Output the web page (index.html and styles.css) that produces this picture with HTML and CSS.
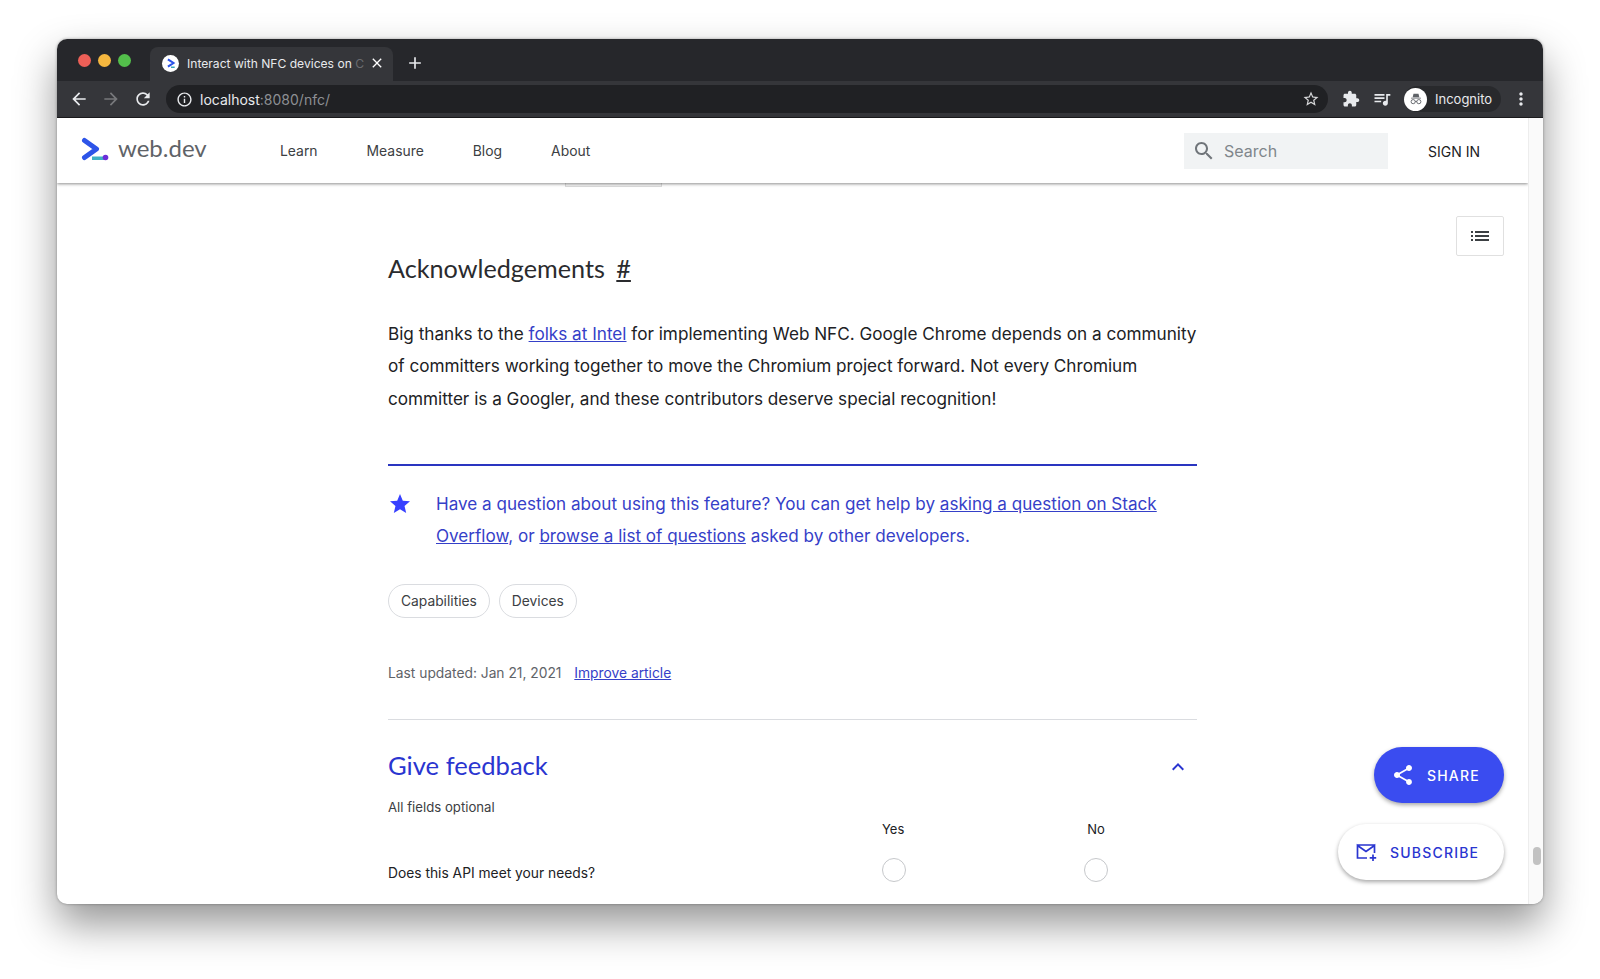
FILE: index.html
```html
<!DOCTYPE html>
<html>

	<head>
		<meta charset="UTF-8">
		<title>Interact with NFC devices on Chrome</title>
		<link rel="stylesheet" href="styles.css">
	</head>

	<body>
		<div class="window">
			<div class="tabstrip">
				<div class="lights">
					<span class="light red"></span>
					<span class="light yellow"></span>
					<span class="light green"></span>
				</div>
				<div class="tab">
					<span class="favicon">
						<svg viewBox="0 0 26 26" width="16" height="16"><path d="M8 7l9 6-9 6" fill="none" stroke="#2d54e8" stroke-width="3.4"/><path d="M13 20h6" stroke="#3aa6b9" stroke-width="2.4"/></svg>
					</span>
					<span class="tab-title">Interact with NFC devices on <span class="fade">C</span></span>
					<svg class="tab-close" viewBox="0 0 24 24" width="16" height="16"><path d="M19 6.41L17.59 5 12 10.59 6.41 5 5 6.41 10.59 12 5 17.59 6.41 19 12 13.41 17.59 19 19 17.59 13.41 12z"/></svg>
				</div>
				<svg class="new-tab" viewBox="0 0 24 24" width="20" height="20"><path d="M19 13h-6v6h-2v-6H5v-2h6V5h2v6h6v2z"/></svg>
			</div>

			<div class="toolbar">
				<svg class="tool" viewBox="0 0 24 24" width="20" height="20"><path d="M20 11H7.83l5.59-5.59L12 4l-8 8 8 8 1.41-1.41L7.83 13H20v-2z"/></svg>
				<svg class="tool dim" viewBox="0 0 24 24" width="20" height="20"><path d="M12 4l-1.41 1.41L16.17 11H4v2h12.17l-5.58 5.59L12 20l8-8z"/></svg>
				<svg class="tool" viewBox="0 0 24 24" width="20" height="20"><path d="M17.65 6.35C16.2 4.9 14.21 4 12 4c-4.42 0-7.99 3.58-7.99 8s3.57 8 7.99 8c3.73 0 6.84-2.55 7.73-6h-2.08c-.82 2.33-3.04 4-5.65 4-3.31 0-6-2.69-6-6s2.69-6 6-6c1.66 0 3.14.69 4.22 1.78L13 11h7V4l-2.35 2.35z"/></svg>
				<div class="omnibox">
					<svg class="info" viewBox="0 0 24 24" width="17" height="17"><path d="M11 7h2v2h-2zm0 4h2v6h-2zm1-9C6.48 2 2 6.48 2 12s4.48 10 10 10 10-4.48 10-10S17.52 2 12 2zm0 18c-4.41 0-8-3.59-8-8s3.59-8 8-8 8 3.59 8 8-3.59 8-8 8z"/></svg>
					<span class="url">localhost<span class="url-rest">:8080/nfc/</span></span>
					<svg class="bookmark" viewBox="0 0 24 24" width="18" height="18"><path d="M22 9.24l-7.19-.62L12 2 9.19 8.63 2 9.24l5.46 4.73L5.82 21 12 17.27 18.18 21l-1.63-7.03L22 9.24zM12 15.4l-3.76 2.27 1-4.28-3.32-2.88 4.38-.38L12 6.1l1.71 4.04 4.38.38-3.32 2.88 1 4.28L12 15.4z"/></svg>
				</div>
				<svg class="tool ext" viewBox="0 0 24 24" width="18" height="18"><path d="M20.5 11H19V7c0-1.1-.9-2-2-2h-4V3.5C13 2.12 11.88 1 10.5 1S8 2.12 8 3.5V5H4c-1.1 0-1.99.9-1.99 2v3.8H3.5c1.49 0 2.7 1.21 2.7 2.7s-1.21 2.7-2.7 2.7H2V20c0 1.1.9 2 2 2h3.8v-1.5c0-1.49 1.21-2.7 2.7-2.7 1.49 0 2.7 1.21 2.7 2.7V22H17c1.1 0 2-.9 2-2v-4h1.5c1.38 0 2.5-1.12 2.5-2.5S21.88 11 20.5 11z"/></svg>
				<svg class="tool media" viewBox="0 0 24 24" width="20" height="20"><path d="M15 6H3v2h12V6zm0 4H3v2h12v-2zM3 16h8v-2H3v2zM17 6v8.18c-.31-.11-.65-.18-1-.18-1.66 0-3 1.34-3 3s1.34 3 3 3 3-1.34 3-3V8h3V6h-5z"/></svg>
				<div class="profile">
					<span class="avatar">
						<svg viewBox="0 0 24 24" width="20" height="20"><path d="M6 10.4h12v1H6zM8 10l1-4.400h6l1 4.400z" fill="#5f6368"/><circle cx="8.600" cy="15.200" r="2.500" fill="none" stroke="#5f6368" stroke-width="1.100"/><circle cx="15.400" cy="15.200" r="2.500" fill="none" stroke="#5f6368" stroke-width="1.100"/><path d="M11 15h2" stroke="#5f6368" stroke-width="1.100"/></svg>
					</span>
					<span class="profile-name">Incognito</span>
				</div>
				<svg class="tool more" viewBox="0 0 24 24" width="20" height="20"><path d="M12 8c1.100 0 2-.9 2-2s-.9-2-2-2-2 .9-2 2 .9 2 2 2zm0 2c-1.100 0-2 .9-2 2s.9 2 2 2 2-.9 2-2-.9-2-2-2zm0 6c-1.100 0-2 .9-2 2s.9 2 2 2 2-.9 2-2-.9-2-2-2z"/></svg>
			</div>

			<div class="page">
				<div class="viewport">
					<header class="site-header">
						<a class="brand">
							<svg viewBox="0 0 28 24" width="28" height="24"><path d="M3.500 3.500l12 8.500-12 8.500" fill="none" stroke="#2d54e8" stroke-width="5" stroke-linejoin="round" stroke-linecap="round"/><path d="M11 21.200h13" stroke="#3fb1c4" stroke-width="3.600"/><circle cx="24.500" cy="20.500" r="2.800" fill="#6b2fd8"/></svg>
							<span class="brand-name">web.dev</span>
						</a>
						<nav class="site-nav">
							<a>Learn</a>
							<a>Measure</a>
							<a>Blog</a>
							<a>About</a>
						</nav>
						<div class="search">
							<svg viewBox="0 0 24 24" width="24" height="24"><path d="M15.500 14h-.79l-.28-.27C15.410 12.590 16 11.110 16 9.500 16 5.910 13.090 3 9.500 3S3 5.910 3 9.500 5.910 16 9.500 16c1.610 0 3.090-.59 4.230-1.570l.27.28v.79l5 4.990L20.490 19l-4.990-5zm-6 0C7.010 14 5 11.990 5 9.500S7.010 5 9.500 5 14 7.010 14 9.500 11.990 14 9.500 14z"/></svg>
							<span>Search</span>
						</div>
						<a class="sign-in">SIGN IN</a>
					</header>

					<main class="article">
						<div class="clipped"></div>
						<h2 class="ack">Acknowledgements <a class="hash">#</a></h2>
						<p class="body-text">Big thanks to the <a>folks at Intel</a> for implementing Web NFC. Google Chrome depends on a community of committers working together to move the Chromium project forward. Not every Chromium committer is a Googler, and these contributors deserve special recognition!</p>

						<div class="callout">
							<svg viewBox="0 0 24 24" width="24" height="24"><path d="M12 17.270L18.180 21l-1.640-7.030L22 9.240l-7.190-.61L12 2 9.190 8.630 2 9.240l5.460 4.730L5.820 21z"/></svg>
							<p>Have a question about using this feature? You can get help by <a>asking a question on Stack Overflow</a>, or <a>browse a list of questions</a> asked by other developers.</p>
						</div>

						<div class="chips">
							<a class="chip">Capabilities</a>
							<a class="chip">Devices</a>
						</div>

						<p class="updated">Last updated: Jan 21, 2021 <a>Improve article</a></p>

						<section class="feedback">
							<div class="feedback-head">
								<h2>Give feedback</h2>
								<svg viewBox="0 0 24 24" width="24" height="24"><path d="M12 8l-6 6 1.410 1.410L12 10.830l4.590 4.580L18 14z"/></svg>
							</div>
							<p class="optional">All fields optional</p>
							<div class="answers">
								<span>Yes</span>
								<span>No</span>
							</div>
							<div class="question">
								<span class="question-text">Does this API meet your needs?</span>
								<span class="radio"></span>
								<span class="radio"></span>
							</div>
						</section>
					</main>

					<button class="toc">
						<svg viewBox="0 0 24 24" width="24" height="24"><path d="M3 13h2v-2H3v2zm0 4h2v-2H3v2zm0-8h2V7H3v2zm4 4h14v-2H7v2zm0 4h14v-2H7v2zM7 7v2h14V7H7z"/></svg>
					</button>

					<a class="fab share">
						<svg viewBox="0 0 24 24" width="24" height="24"><path d="M18 16.080c-.76 0-1.440.3-1.960.77L8.910 12.700c.05-.23.09-.46.09-.7s-.04-.47-.09-.7l7.050-4.110c.54.5 1.250.81 2.040.81 1.660 0 3-1.340 3-3s-1.340-3-3-3-3 1.340-3 3c0 .24.04.47.09.7L8.040 9.810C7.500 9.310 6.790 9 6 9c-1.660 0-3 1.340-3 3s1.340 3 3 3c.79 0 1.500-.31 2.040-.81l7.120 4.160c-.05.21-.08.43-.08.65 0 1.610 1.310 2.920 2.920 2.920 1.610 0 2.920-1.310 2.920-2.920s-1.310-2.920-2.920-2.920z"/></svg>
						SHARE
					</a>
					<a class="fab subscribe">
						<svg viewBox="0 0 24 24" width="24" height="24"><path d="M13 18H3.500V5.500L12 11.500l8.500-6V13M3.500 5h17" fill="none" stroke="#2a35d0" stroke-width="1.700"/><path d="M19 14.500v6.500M15.700 17.800h6.500" stroke="#2a35d0" stroke-width="1.700"/></svg>
						SUBSCRIBE
					</a>
				</div>
				<div class="scrollbar"><span class="thumb"></span></div>
			</div>
		</div>
	</body>

</html>
```

FILE: styles.css
```css
html,
body {
	height: 100%;
	overflow: hidden;
}

body {
	margin: 0;
	padding: 39px 0 0 57px;
	box-sizing: border-box;
	background: #fff;
	font-family: Inter, "Liberation Sans", sans-serif;
	color: #202124;
}

p,
h2 {
	margin: 0;
}

a {
	color: inherit;
}

.window {
	width: 1486px;
	height: 865px;
	border-radius: 10px;
	display: flex;
	flex-direction: column;
	overflow: hidden;
	background: #fff;
	box-shadow: 0 20px 42px rgba(0, 0, 0, .42), 0 0 3px rgba(0, 0, 0, .35);
}

/* browser chrome */
.tabstrip {
	height: 42px;
	flex: none;
	display: flex;
	align-items: flex-end;
	background: #26272b;
}

.lights {
	width: 93px;
	height: 100%;
	padding: 15px 0 0 21px;
	box-sizing: border-box;
	display: flex;
	gap: 7px;
}

.light {
	width: 13px;
	height: 13px;
	border-radius: 50%;
}

.red {
	background: #ec5f57;
}

.yellow {
	background: #f5b73f;
}

.green {
	background: #53bf4b;
}

.tab {
	width: 243px;
	height: 34px;
	padding: 0 8px 2px 12px;
	box-sizing: border-box;
	display: flex;
	align-items: center;
	background: #35363a;
	border-radius: 8px 8px 0 0;
	color: #e8eaed;
	font-size: 12.1px;
}

.favicon {
	width: 17px;
	height: 17px;
	flex: none;
	display: flex;
	align-items: center;
	justify-content: center;
	border-radius: 50%;
	background: #fff;
	margin-right: 8px;
}

.tab-title {
	flex: 1;
	white-space: nowrap;
	overflow: hidden;
}

.fade {
	color: #6a6b6f;
}

.tab-close {
	fill: #fff;
	flex: none;
}

.new-tab {
	fill: #e8eaed;
	margin: 0 0 8px 12px;
}

.toolbar {
	height: 37px;
	flex: none;
	display: flex;
	align-items: center;
	background: #35363a;
	padding-left: 12px;
	border-bottom: 1px solid #1c1c1e;
	box-sizing: border-box;
}

.tool {
	fill: #e8eaed;
	flex: none;
	margin-right: 12px;
}

.tool.dim {
	fill: #77787b;
}

.omnibox {
	width: 1162px;
	height: 28px;
	margin-left: 1px;
	padding: 0 8px 0 10px;
	box-sizing: border-box;
	display: flex;
	align-items: center;
	border-radius: 14px;
	background: #202124;
	font-size: 14px;
}

.info {
	fill: #e8eaed;
	margin-right: 7px;
}

.url {
	flex: 1;
	color: #e8eaed;
}

.url-rest {
	color: #8d8f93;
}

.bookmark {
	fill: #d5d6d8;
}

.tool.ext {
	margin-left: 14px;
	margin-right: 12px;
}

.tool.media {
	margin-right: 0;
}

.profile {
	height: 26px;
	width: 97px;
	margin-left: 12px;
	flex: none;
	display: flex;
	align-items: center;
	border-radius: 13px;
	background: #28292c;
	color: #e8eaed;
	font-size: 13px;
}

.avatar {
	width: 23px;
	height: 23px;
	margin-right: 8px;
	display: flex;
	align-items: center;
	justify-content: center;
	border-radius: 50%;
	background: #fff;
}

.tool.more {
	margin: 0 0 0 10px;
}

/* page */
.page {
	flex: 1;
	display: flex;
	min-height: 0;
}

.viewport {
	flex: 1;
	position: relative;
	min-width: 0;
}

.scrollbar {
	width: 15px;
	flex: none;
	box-sizing: border-box;
	padding: 729px 0 0 4px;
	position: relative;
	z-index: 2;
	background: #fafafa;
	border-left: 1px solid #ededed;
}

.thumb {
	display: block;
	width: 8px;
	height: 18px;
	border-radius: 4px;
	background: #c2c2c2;
}

.site-header {
	height: 65px;
	position: relative;
	z-index: 1;
	display: flex;
	align-items: center;
	background: #fff;
	box-shadow: 0 1px 3px rgba(0, 0, 0, .45);
}

.brand {
	width: 223px;
	padding-left: 24px;
	margin-top: -4px;
	box-sizing: border-box;
	display: flex;
	align-items: center;
	gap: 9px;
}

.brand-name {
	font-family: Lato, sans-serif;
	font-size: 24px;
	color: #5f6368;
	margin-top: -2px;
}

.site-nav {
	display: flex;
	gap: 49px;
	font-size: 13.9px;
	color: #3c4043;
	flex: 1;
}

.search {
	width: 204px;
	height: 36px;
	padding-left: 8px;
	box-sizing: border-box;
	display: flex;
	align-items: center;
	gap: 8px;
	background: #f1f3f4;
	color: #80868b;
	font-size: 16px;
}

.search svg {
	fill: #70757a;
}

.sign-in {
	width: 140px;
	padding-left: 40px;
	box-sizing: border-box;
	font-size: 14px;
	color: #202124;
	margin-top: 1px;
}

.article {
	padding-left: 331px;
	width: 809px;
}

.clipped {
	width: 97px;
	height: 4px;
	margin-left: 177px;
	box-sizing: border-box;
	background: #f4f4f4;
	border: 1px solid #dcdcdc;
	border-top: 0;
}

.ack {
	margin-top: 63px;
	font-family: Lato, sans-serif;
	font-weight: 400;
	font-size: 25.2px;
	line-height: 36px;
	color: #2a2b2e;
}

.hash {
	margin-left: 5px;
	text-decoration: underline;
}

.body-text {
	margin-top: 32px;
	font-size: 17.15px;
	line-height: 32.4px;
}

.body-text a,
.callout a,
.updated a {
	color: #3540c8;
	text-decoration: underline;
}

.callout {
	margin-top: 49px;
	padding: 22px 0 0;
	display: flex;
	border-top: 2px solid #2a35c0;
	color: #3540c8;
	font-size: 17.1px;
	line-height: 32px;
}

.callout svg {
	flex: none;
	fill: #3740ff;
	margin: 4px 24px 0 0;
}

.chips {
	margin-top: 32px;
	display: flex;
	gap: 9px;
}

.chip {
	height: 32px;
	padding: 0 12px;
	display: flex;
	align-items: center;
	border: 1px solid #dadce0;
	border-radius: 17px;
	font-size: 13.8px;
	color: #3c4043;
}

.updated {
	margin-top: 45px;
	font-size: 13.8px;
	line-height: 20px;
	color: #5f6368;
}

.updated a {
	margin-left: 9px;
}

.feedback {
	margin-top: 36px;
	border-top: 1px solid #dadce0;
}

.feedback-head {
	height: 46px;
	margin-top: 22px;
	display: flex;
	align-items: center;
	justify-content: space-between;
	padding-right: 7px;
}

.feedback-head h2 {
	font-family: Lato, sans-serif;
	font-weight: 400;
	font-size: 25.6px;
	color: #2a35d0;
}

.feedback-head svg {
	fill: #2a35d0;
	margin-top: 4px;
}

.optional {
	margin-top: 9px;
	font-size: 13.2px;
	line-height: 20px;
	color: #3c4043;
}

.answers {
	display: flex;
	margin-top: 2px;
	padding-left: 494px;
	gap: 183px;
	font-size: 13px;
	line-height: 20px;
}

.question {
	margin-top: 18px;
	display: flex;
	align-items: center;
	gap: 178px;
	height: 26px;
	font-size: 13.8px;
}

.question-text {
	width: 316px;
	flex: none;
	margin-top: 5px;
}

.radio {
	width: 24px;
	height: 24px;
	flex: none;
	box-sizing: border-box;
	border-radius: 50%;
	border: 1.5px solid #c6c8cb;
}

/* things that float over the page */
.toc {
	position: absolute;
	top: 98px;
	right: 24px;
	width: 48px;
	height: 40px;
	padding: 0;
	display: flex;
	align-items: center;
	justify-content: center;
	background: #fff;
	border: 1px solid #e0e0e0;
	border-radius: 2px;
}

.toc svg {
	fill: #3c4043;
}

.fab {
	position: absolute;
	right: 24px;
	display: flex;
	align-items: center;
	gap: 12px;
	height: 56px;
	box-sizing: border-box;
	border-radius: 28px;
	font-size: 14px;
	font-weight: 500;
	letter-spacing: 1.2px;
}

.share {
	top: 629px;
	width: 130px;
	padding-left: 17px;
	background: #3a4cf0;
	color: #fff;
	box-shadow: 0 2px 4px rgba(0, 0, 0, .35);
}

.share svg {
	fill: #fff;
}

.subscribe {
	top: 706px;
	width: 166px;
	padding-left: 16px;
	background: #fff;
	color: #2a35d0;
	box-shadow: 0 2px 4px rgba(0, 0, 0, .35);
}
```
